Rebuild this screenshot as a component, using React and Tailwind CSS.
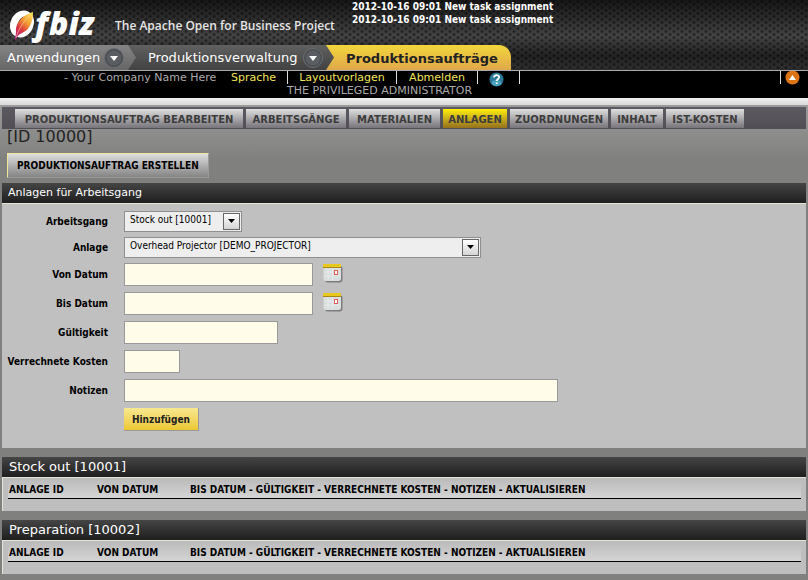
import React from "react";

const SANS = "font-['DejaVu_Sans',Verdana,sans-serif]";
const NARROW = "font-['DejaVu_Sans_Condensed',Tahoma,sans-serif]";

function Logo() {
  return (
    <svg width="92" height="48" viewBox="0 0 92 48" role="img" aria-label="Ofbiz" className="shrink-0">
      <defs>
        <linearGradient id="feather" x1="0.8" y1="0" x2="0.2" y2="1">
          <stop offset="0" stopColor="#fae05a" />
          <stop offset="0.35" stopColor="#f29a34" />
          <stop offset="0.65" stopColor="#dc3a3c" />
          <stop offset="1" stopColor="#b3157c" />
        </linearGradient>
      </defs>
      <ellipse cx="14" cy="24" rx="11.500" ry="14" transform="rotate(26 14 24)" fill="#fff" />
      <ellipse cx="15" cy="24" rx="5" ry="8" transform="rotate(26 15 24)" fill="#3a2020" />
      <path d="M7 40 C7 37 8 35 8 32 C7 25 12 16 25 12 C25 21 22 30 14 33 C11 34 9 36 8 40 Z" fill="url(#feather)" />
      <path d="M8 38 C10 30 15 22 22 15" stroke="#fbd9a0" strokeWidth="0.6" fill="none" />
      <g fill="#fff" className="font-['Open_Sans',sans-serif] italic font-extrabold">
        <text x="27" y="35" fontSize="32">f</text>
        <text x="41" y="35" fontSize="32">biz</text>
      </g>
    </svg>
  );
}

function Chevron() {
  return (
    <svg width="20" height="20" viewBox="0 0 20 20" className="shrink-0" aria-hidden="true">
      <circle cx="10" cy="10" r="9.5" fill="#4a4d51" stroke="#6b6e72" />
      <circle cx="10" cy="10" r="7.5" fill="#5a5d62" />
      <path d="M6 8 H14 L10 13 Z" fill="#fff" />
    </svg>
  );
}

function Calendar() {
  return (
    <button type="button" aria-label="Kalender" className="-mt-1 ml-2.5 block">
      <svg width="20" height="20" viewBox="0 0 20 20">
        <rect x="2" y="3" width="17.500" height="16.500" rx="3" fill="#7c7c7c" />
        <rect x="0.5" y="1" width="17.500" height="17" rx="2.5" fill="#d9dede" />
        <path d="M5 6V17M9.500 6V17M2 9H10M2 13H17" stroke="#e8ebeb" />
        <rect x="0" y="1" width="18" height="3" fill="#e8c81c" />
        <rect x="0" y="4" width="18" height="1" fill="#a8861c" />
        <rect x="11.500" y="7.500" width="3" height="4" fill="#fff" stroke="#e8605c" />
      </svg>
    </button>
  );
}

function Select({ id, value, width }) {
  return (
    <div className={`relative ${width}`}>
      <select
        id={id}
        className={`block h-[21px] w-full appearance-none border border-[#8f8f8f] bg-[#eeeeee] pb-0.5 pl-[5px] text-[10px] leading-4 text-black ${NARROW}`}
      >
        <option>{value}</option>
      </select>
      <span className="pointer-events-none absolute top-0.5 right-0.5 flex h-[17px] w-[17px] items-center justify-center border border-[#666] bg-gradient-to-b from-white to-[#d4d4d4]">
        <svg width="7" height="4" viewBox="0 0 7 4">
          <path d="M0 0H7L3.500 4Z" fill="#000" />
        </svg>
      </span>
    </div>
  );
}

function Row({ id, label, children, height = "h-[23px]" }) {
  return (
    <div className={`flex items-center ${height}`}>
      <label htmlFor={id} className="mr-4 w-[106px] shrink-0 text-right text-[10px] font-bold whitespace-nowrap">
        {label}
      </label>
      {children}
    </div>
  );
}

function TextBox({ id, width }) {
  return <input id={id} type="text" className={`h-[23px] border border-[#999] bg-[#fffdea] px-1 text-[10px] ${width}`} />;
}

function PanelTitle({ children, size }) {
  return (
    <h2 className={`flex h-5 items-center bg-gradient-to-b from-[#454545] to-[#1f1f1f] text-white ${size} ${SANS}`}>
      {children}
    </h2>
  );
}

function ListPanel({ title }) {
  return (
    <section className="mt-[9px]">
      <PanelTitle size="px-[7px] text-[13px]">{title}</PanelTitle>
      <div className="h-[34px] border-t border-l border-[#e4e4d8] bg-[#bebebe] px-[5px]">
        <table className="w-full table-fixed border-collapse border-b border-black">
          <thead>
            <tr className="h-5 bg-gradient-to-b from-[#bababa] to-[#d6d6d6] text-left text-[10px] text-black">
              <th className="w-[88px] pt-1 pl-px leading-4">ANLAGE ID</th>
              <th className="w-[93px] pt-1 pl-px leading-4">VON DATUM</th>
              <th className="pt-1 pl-px leading-4">
                BIS DATUM - GÜLTIGKEIT - VERRECHNETE KOSTEN - NOTIZEN - AKTUALISIEREN
              </th>
            </tr>
          </thead>
        </table>
      </div>
    </section>
  );
}

const TABS = [
  ["PRODUKTIONSAUFTRAG BEARBEITEN", "w-[228px]"],
  ["ARBEITSGÄNGE", "w-[100px]"],
  ["MATERIALIEN", "w-[91px]"],
  ["ANLAGEN", "w-[64px]"],
  ["ZUORDNUNGEN", "w-[98px]"],
  ["INHALT", "w-[52px]"],
  ["IST-KOSTEN", "w-[78px]"],
];

export default function App() {
  return (
    <div className={`min-h-screen overflow-hidden bg-[#80807e] text-black ${NARROW}`}>
      <header className={SANS}>
        <div className="relative border-b border-[#aaa] bg-gradient-to-b from-[#161616] via-[#424242] to-[#303030]">
          <svg className="absolute inset-0 h-full w-full" aria-hidden="true">
            <defs>
              <pattern id="mesh" width="8" height="6" patternUnits="userSpaceOnUse">
                <circle cx="2" cy="1.500" r="1.500" fill="#000" fillOpacity="0.4" />
                <circle cx="6" cy="4.500" r="1.500" fill="#000" fillOpacity="0.4" />
              </pattern>
              <linearGradient id="shade" x1="0" y1="0" x2="0" y2="1">
                <stop offset="0.55" stopColor="#000" stopOpacity="0" />
                <stop offset="0.8" stopColor="#000" stopOpacity="0.4" />
                <stop offset="1" stopColor="#000" stopOpacity="0" />
              </linearGradient>
            </defs>
            <rect width="100%" height="100%" fill="url(#mesh)" />
            <rect width="100%" height="100%" fill="url(#shade)" />
          </svg>
          <div className="relative flex h-[45px] pl-2">
            <Logo />
            <p className="mt-4 ml-[15px] w-[237px] shrink-0 font-['Open_Sans',sans-serif] text-[12px] leading-5 font-semibold whitespace-nowrap text-[#e6e6e6]">
              The Apache Open for Business Project
            </p>
            <ul className={`text-[10px] leading-[13px] font-bold whitespace-nowrap text-white ${NARROW}`}>
              <li>2012-10-16 09:01 New task assignment</li>
              <li>2012-10-16 09:01 New task assignment</li>
            </ul>
          </div>
          <nav className="relative flex h-[25px] items-stretch text-[13px] whitespace-nowrap text-white">
            <div className="z-20 flex w-[136px] items-center justify-between bg-gradient-to-b from-[#858585] to-[#666] pr-3 pl-[7px] [clip-path:polygon(0_0,128px_0,100%_50%,128px_100%,0_100%)]">
              <a href="#anwendungen">Anwendungen</a>
              <Chevron />
            </div>
            <div className="z-10 -ml-2 flex w-[206px] items-center justify-between bg-gradient-to-b from-[#606060] to-[#424242] pr-[11px] pl-5 [clip-path:polygon(0_0,198px_0,100%_50%,198px_100%,0_100%)]">
              <a href="#produktionsverwaltung">Produktionsverwaltung</a>
              <Chevron />
            </div>
            <a
              href="#produktionsauftraege"
              className="-ml-2 flex w-[185px] items-center rounded-tr-xl bg-gradient-to-b from-[#f2d63a] to-[#dfa84a] pl-5 font-bold text-[#222]"
            >
              <span className="pt-0.5">Produktionsaufträge</span>
            </a>
          </nav>
        </div>
        <div className="h-[27px] bg-black text-[11px] leading-[13px] text-[#aaa]">
          <div className="flex h-[13px] whitespace-nowrap">
            <span className="ml-16 w-[167px]">- Your Company Name Here</span>
            <a href="#sprache" className="w-[57px] border-r border-[#ddd] text-[#f2e45a]">Sprache</a>
            <a href="#layout" className="w-[109px] border-r border-[#ddd] text-center text-[#f2e45a]">Layoutvorlagen</a>
            <a href="#abmelden" className="w-[81px] border-r border-[#ddd] text-center text-[#f2e45a]">Abmelden</a>
            <a href="#hilfe" aria-label="Hilfe" className="flex w-[42px] justify-center border-r border-[#ddd] pr-1">
              <svg width="15" height="16" viewBox="0 0 15 16" className="shrink-0">
                <circle cx="7.500" cy="8.500" r="7" fill="#2d7898" />
                <ellipse cx="7.500" cy="12" rx="5" ry="3" fill="#4ba3bd" />
                <path d="M5 6.500C5 3.300 10.300 3.500 10.200 6.300C10.100 8 7.700 8 7.700 10M7.700 11.500V13" stroke="#fff" strokeWidth="1.700" fill="none" />
              </svg>
            </a>
            <a href="#top" aria-label="Einklappen" className="ml-auto flex w-7 border-l border-[#ddd] pl-1">
              <svg width="15" height="14" viewBox="0 0 15 14" className="shrink-0">
                <circle cx="7.500" cy="6.500" r="7" fill="#dc7414" />
                <path d="M4 9H11L7.500 4Z" fill="#fff" />
              </svg>
            </a>
          </div>
          <p className="ml-[287px] whitespace-nowrap">THE PRIVILEGED ADMINISTRATOR</p>
        </div>
      </header>

      <div className="h-[7px] bg-gradient-to-b from-[#f0f0f0] to-[#dadada]" />
      <main className="bg-gradient-to-b from-[#9a9a9a] to-[#80807e] to-[55px] px-0.5 pt-0.5">
        <nav className="flex h-[22px] gap-[3px] bg-gradient-to-b from-[#5d5962] to-[#514e55] pt-0.5 pl-[13px]">
          {TABS.map(([name, width]) => (
            <a
              key={name}
              href={"#" + name.toLowerCase()}
              className={`flex h-[19px] items-center justify-center bg-gradient-to-b pt-0.5 text-[10px] font-bold whitespace-nowrap text-[#3c3c3c] ${SANS} ${width} ${
                name === "ANLAGEN" ? "from-[#fff000] to-[#94701c]" : "from-[#e0e0e0] to-[#77757b]"
              }`}
            >
              {name}
            </a>
          ))}
        </nav>
        <h1 className={`ml-[5px] h-4 text-[16px] leading-4 text-[#222] ${SANS}`}>[ID 10000]</h1>
        <button
          type="button"
          className="mt-2 ml-[5px] block h-[25px] border border-t-[#eee49a] border-r-[#999] border-b-[#999] border-l-[#eee49a] bg-gradient-to-b from-[#dedede] to-[#858585] px-[9px] text-[10px] font-bold whitespace-nowrap"
        >
          PRODUKTIONSAUFTRAG ERSTELLEN
        </button>

        <section className="mt-[5px]">
          <PanelTitle size="px-1.5 text-[11px]">Anlagen für Arbeitsgang</PanelTitle>
          <form className="flex h-[245px] flex-col gap-1.5 border-t border-[#e4e4d8] bg-[#c0c0c0] pt-[7px]">
            <Row id="op" label="Arbeitsgang" height="h-5">
              <Select id="op" value="Stock out [10001]" width="w-[118px]" />
            </Row>
            <Row id="asset" label="Anlage" height="h-5">
              <Select id="asset" value="Overhead Projector [DEMO_PROJECTOR]" width="w-[357px]" />
            </Row>
            <Row id="from" label="Von Datum">
              <TextBox id="from" width="w-[189px]" />
              <Calendar />
            </Row>
            <Row id="to" label="Bis Datum">
              <TextBox id="to" width="w-[189px]" />
              <Calendar />
            </Row>
            <Row id="valid" label="Gültigkeit">
              <TextBox id="valid" width="w-[154px]" />
            </Row>
            <Row id="cost" label="Verrechnete Kosten">
              <TextBox id="cost" width="w-14" />
            </Row>
            <Row id="notes" label="Notizen">
              <TextBox id="notes" width="w-[434px]" />
            </Row>
            <button
              type="submit"
              className="ml-[122px] h-[23px] self-start border-r border-b border-[#999] bg-gradient-to-b from-[#f8e88e] to-[#ecc72c] px-2 text-[10px] font-bold text-[#222]"
            >
              Hinzufügen
            </button>
          </form>
        </section>

        <ListPanel title="Stock out [10001]" />
        <ListPanel title="Preparation [10002]" />
      </main>
    </div>
  );
}
